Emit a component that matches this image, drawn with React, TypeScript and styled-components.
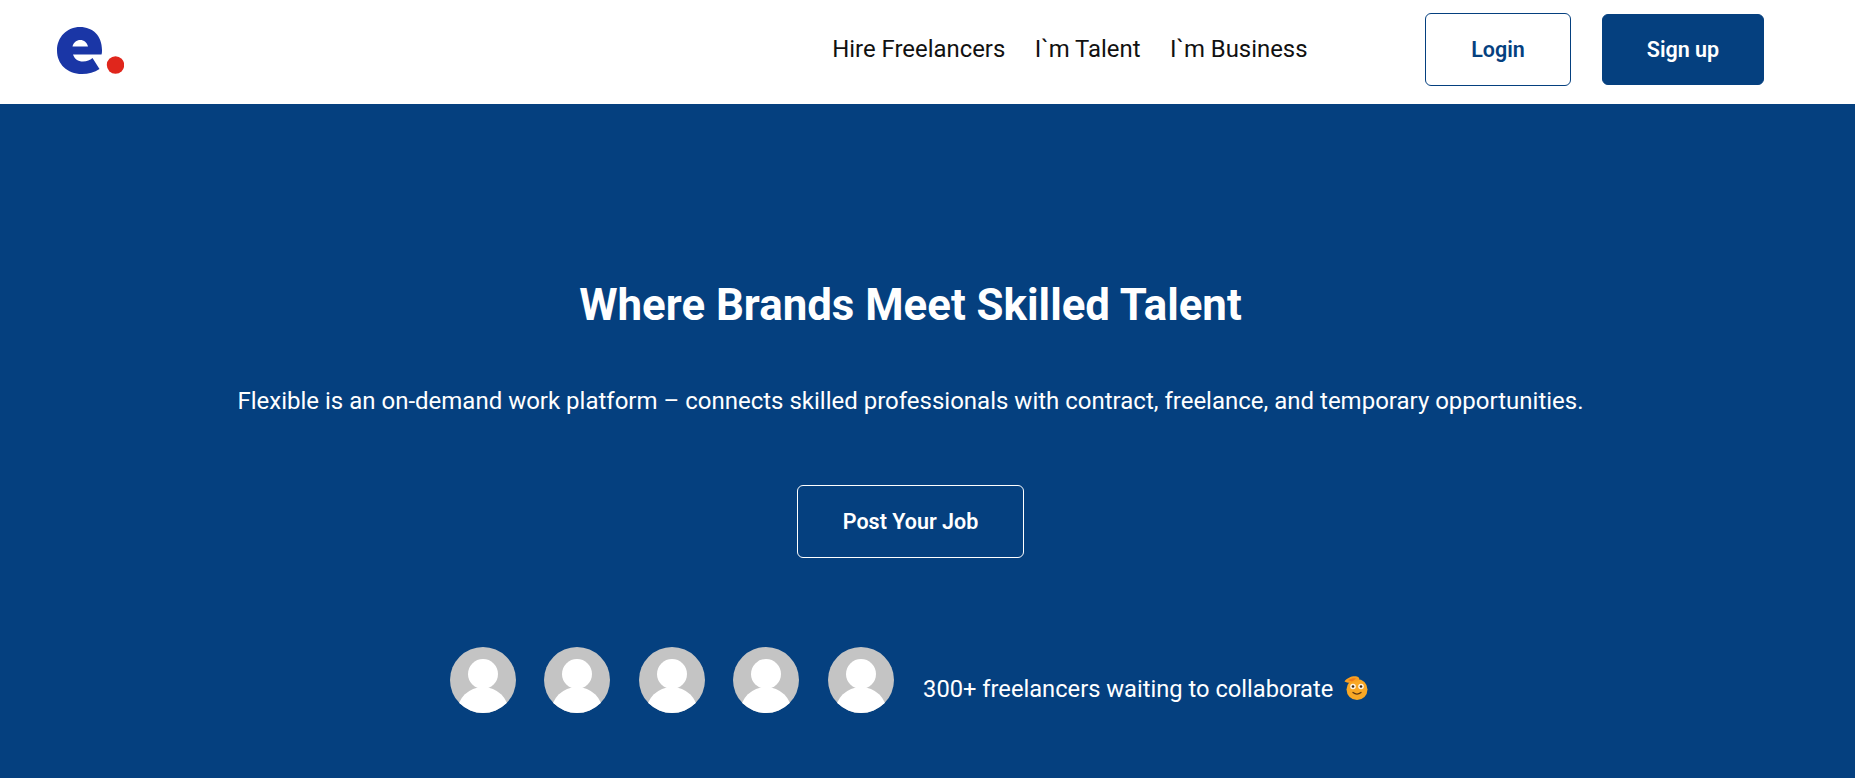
import { createGlobalStyle, styled } from "styled-components";

const GlobalStyle = createGlobalStyle`
  html, body {
    margin: 0;
    padding: 0;
    background: #05407f;
    font-family: Roboto, "Liberation Sans", sans-serif;
  }
  * {
    box-sizing: border-box;
  }
`;

const Header = styled.header`
  height: 104px;
  background: #ffffff;
  display: flex;
  align-items: center;
  padding: 0 91px 5px 57px;
`;

const Logo = styled.svg`
  width: 67px;
  height: 47px;
  margin-top: 1px;
  flex: none;
`;

const Nav = styled.nav`
  margin: -2px 117.5px 0 auto;
  display: flex;
  gap: 29.5px;
`;

const NavLink = styled.a`
  font-size: 23.9px;
  color: #111111;
`;

const Actions = styled.div`
  display: flex;
  align-items: center;
  gap: 31px;
`;

const Button = styled.button<{ $variant: "outline" | "solid" | "ghost" }>`
  font-family: inherit;
  font-weight: 600;
  font-size: 21.5px;
  border-radius: 6px;
  cursor: pointer;
  color: ${(p) => (p.$variant === "outline" ? "#05407f" : "#ffffff")};
  background: ${(p) => (p.$variant === "solid" ? "#05407f" : "transparent")};
  border: 1px solid
    ${(p) => (p.$variant === "ghost" ? "#ffffff" : "#05407f")};
  width: ${(p) =>
    p.$variant === "solid" ? "162px" : p.$variant === "outline" ? "146px" : "227px"};
  height: ${(p) => (p.$variant === "solid" ? "71px" : "73px")};
`;

const Hero = styled.main`
  height: 674px;
  background: #05407f;
  color: #ffffff;
  display: flex;
  flex-direction: column;
  align-items: center;
  padding: 171px 34px 0 0;
`;

const Title = styled.h1`
  margin: 0;
  font-size: 43.8px;
  line-height: 60px;
  font-weight: 700;
`;

const Subtitle = styled.p`
  margin: 50px 0 0;
  font-size: 24px;
  line-height: 32px;
`;

const PostAction = styled.div`
  margin-top: 68px;
`;

const FreelancerRow = styled.div`
  margin-top: 89px;
  padding-right: 3px;
  display: flex;
  align-items: center;
`;

const Avatars = styled.div`
  display: flex;
  gap: 28.6px;
`;

const Avatar = styled.svg`
  width: 66px;
  height: 66px;
  display: block;
`;

const Waiting = styled.span`
  margin: 17px 0 0 29px;
  font-size: 23.7px;
`;

const Emoji = styled.svg`
  width: 24px;
  height: 24px;
  margin: 15px 0 0 11px;
  flex: none;
`;

function UserAvatar() {
  return (
    <Avatar viewBox="0 0 66 66">
      <defs>
        <clipPath id="avatar-clip">
          <circle cx="33" cy="33" r="33" />
        </clipPath>
      </defs>
      <circle cx="33" cy="33" r="33" fill="#c4c4c4" />
      <g clipPath="url(#avatar-clip)">
        <circle cx="33" cy="27" r="15" fill="#ffffff" />
        <ellipse cx="33" cy="66" rx="26" ry="26" fill="#ffffff" />
      </g>
    </Avatar>
  );
}

export default function App() {
  return (
    <>
      <GlobalStyle />
      <Header>
        <Logo viewBox="0 0 67 47">
          <path
            fill="#1a36a6"
            fillRule="evenodd"
            d="M23 0C36 0 45 9 45 23C45 25 45 26 44.5 27.5L16 27.5C17.5 32 21 34.5 26 34.5C30 34.5 33 33 35.5 31L42.5 42C37.5 45.5 31.5 47 25 47C10 47 0 37 0 23.5C0 10 10 0 23 0ZM15.5 19.5L31 19.5C30 15.5 27 13 23.3 13C19.5 13 16.5 15.5 15.5 19.5Z"
          />
          <circle cx="58.5" cy="38" r="8.7" fill="#e0261c" />
        </Logo>
        <Nav>
          <NavLink>Hire Freelancers</NavLink>
          <NavLink>I`m Talent</NavLink>
          <NavLink>I`m Business</NavLink>
        </Nav>
        <Actions>
          <Button $variant="outline">Login</Button>
          <Button $variant="solid">Sign up</Button>
        </Actions>
      </Header>
      <Hero>
        <Title>Where Brands Meet Skilled Talent</Title>
        <Subtitle>
          Flexible is an on-demand work platform – connects skilled professionals with contract,
          freelance, and temporary opportunities.
        </Subtitle>
        <PostAction>
          <Button $variant="ghost">Post Your Job</Button>
        </PostAction>
        <FreelancerRow>
          <Avatars>
            <UserAvatar />
            <UserAvatar />
            <UserAvatar />
            <UserAvatar />
            <UserAvatar />
          </Avatars>
          <Waiting>300+ freelancers waiting to collaborate</Waiting>
          <Emoji viewBox="0 0 24 24">
            <circle cx="13" cy="13.5" r="10.5" fill="#f9a825" />
            <path d="M0.5 5.5C3 1.5 9 -0.5 13 0.5C16 1.5 16 4 13.5 5C9 7 4 7.5 0.5 5.5Z" fill="#f9a020" />
            <path d="M4 4C7 2.5 10 2 12 2.5L9 5C7 5.5 5 5 4 4Z" fill="#ee7a1c" />
            <circle cx="9" cy="10.5" r="2.8" fill="#fff5e3" />
            <circle cx="17" cy="10.5" r="2.8" fill="#fff5e3" />
            <circle cx="9" cy="10.5" r="1.3" fill="#3d2710" />
            <circle cx="17" cy="10.5" r="1.3" fill="#3d2710" />
            <path d="M9 16.5C11.5 18.5 14.5 18.5 17 16.5" fill="none" stroke="#5c3612" strokeWidth="1.3" strokeLinecap="round" />
          </Emoji>
        </FreelancerRow>
      </Hero>
    </>
  );
}
